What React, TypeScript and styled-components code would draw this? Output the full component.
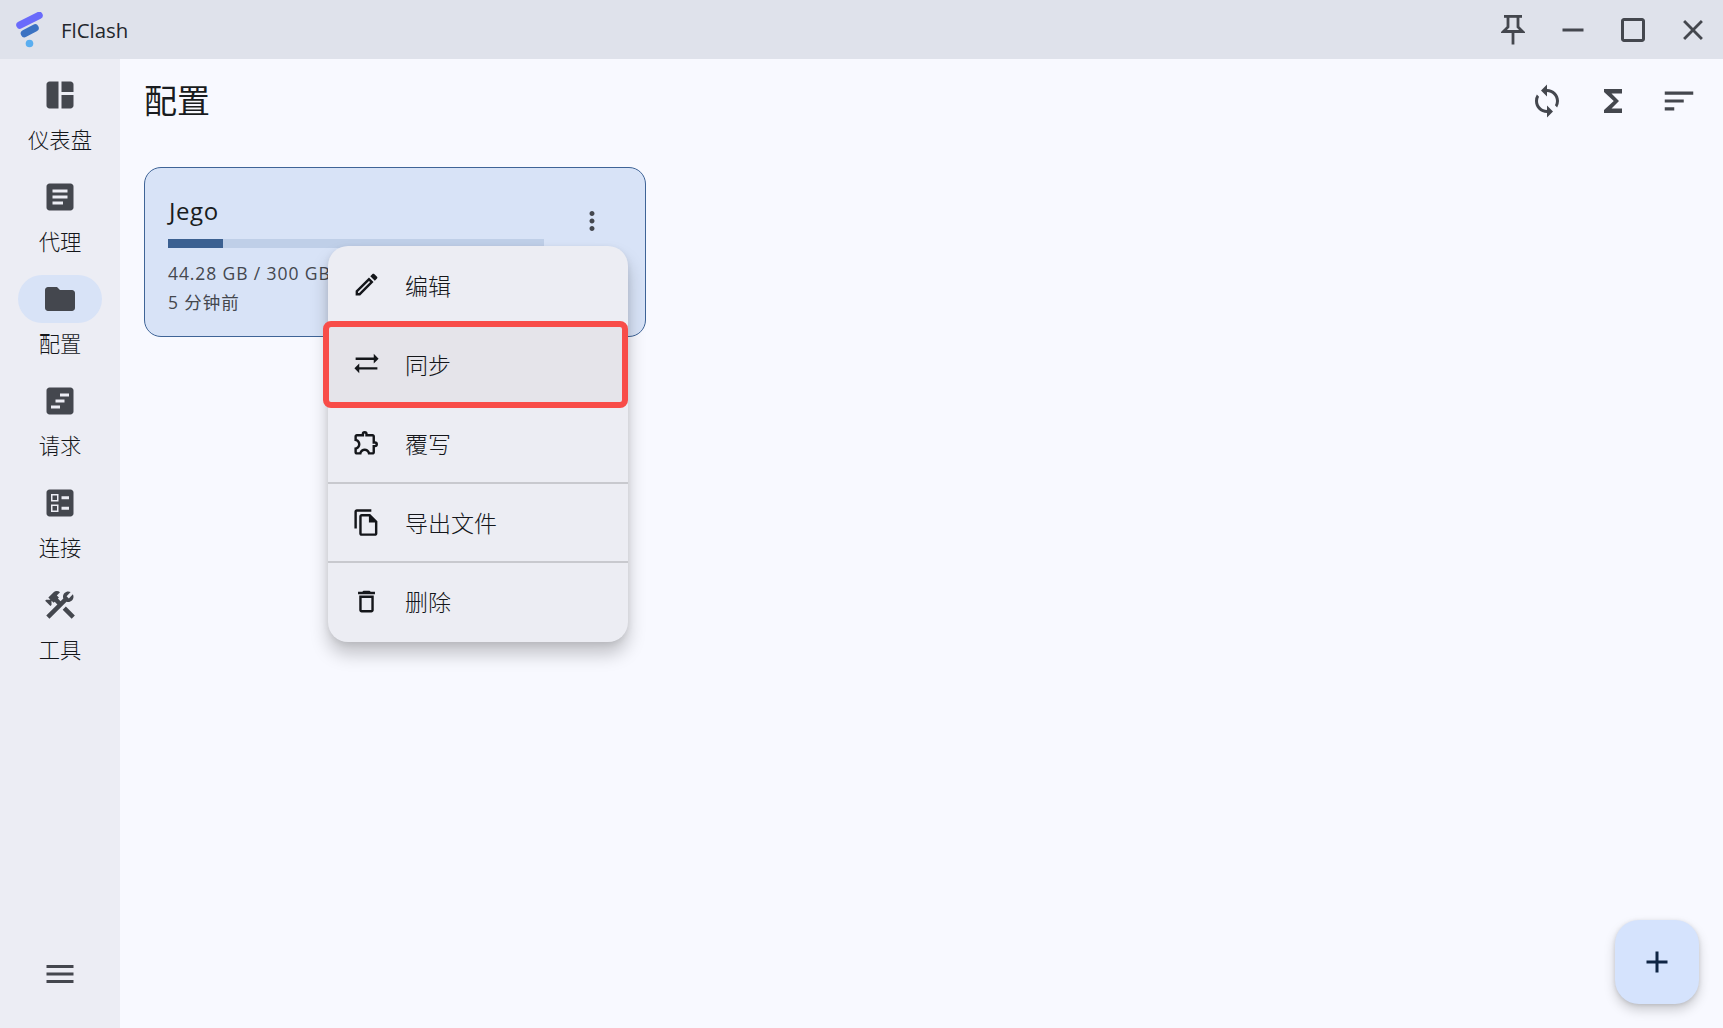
import React from "react";
import styled, { createGlobalStyle } from "styled-components";
import {
  MdSpaceDashboard, MdArticle, MdFolder, MdViewTimeline, MdBallot, MdConstruction, MdMenu,
  MdRemove, MdCropSquare, MdClose, MdSync, MdFunctions, MdSort, MdAdd, MdMoreVert,
  MdOutlineEdit, MdSyncAlt, MdOutlineExtension, MdOutlineFileCopy, MdOutlineDelete,
} from "react-icons/md";

const Global = createGlobalStyle`
  html, body { margin: 0; padding: 0; height: 100%; overflow: hidden; }
  body { font-family: "Open Sans", "Noto Sans CJK SC", sans-serif; color: #191c20; }
  #root { height: 100%; }
`;

const Shell = styled.div`
  width: 1723px;
  height: 1028px;
  display: flex;
  flex-direction: column;
  background: #f8f9ff;
  overflow: hidden;
`;
const TitleBar = styled.header`
  height: 59px;
  flex: none;
  background: #dfe2eb;
  display: flex;
  align-items: center;
  padding: 0 0 0 16px;
`;
const Brand = styled.div`
  display: flex;
  align-items: center;
  gap: 17px;
  flex: 1;
  font-size: 20.4px;
  color: #23262b;
  padding-top: 1px;
`;
const WindowButtons = styled.div`
  display: flex;
  align-items: center;
  width: 240px;
  color: #44474e;
`;
const WindowButton = styled.span`
  width: 60px;
  display: flex;
  justify-content: center;
`;
const Body = styled.div`
  flex: 1;
  display: flex;
  min-height: 0;
`;
const Sidebar = styled.nav`
  width: 120px;
  flex: none;
  background: #ecedf4;
  display: flex;
  flex-direction: column;
  align-items: center;
  padding-top: 12px;
  box-sizing: border-box;
`;
const NavItem = styled.div`
  height: 102px;
  display: flex;
  flex-direction: column;
  align-items: center;
  flex: none;
`;
const NavPill = styled.div<{ $active?: boolean }>`
  width: 84px;
  height: 48px;
  border-radius: 24px;
  background: ${(p) => (p.$active ? "#d8e3f7" : "transparent")};
  color: #44474e;
  display: flex;
  align-items: center;
  justify-content: center;
`;
const NavLabel = styled.span`
  font-size: 21.3px;
  line-height: 30px;
  margin-top: 6px;
  color: #14161a;
  font-weight: 300;
`;
const MenuToggle = styled.div`
  margin-top: auto;
  height: 72px;
  display: flex;
  align-items: flex-start;
  color: #44474e;
`;
const Main = styled.main`
  flex: 1;
  min-width: 0;
  display: flex;
  flex-direction: column;
  position: relative;
`;
const AppBar = styled.div`
  height: 84px;
  flex: none;
  display: flex;
  align-items: center;
  padding: 0 25px 0 24px;
  box-sizing: border-box;
`;
const PageTitle = styled.h1`
  flex: 1;
  margin: 0;
  font-size: 33px;
  font-weight: 400;
  line-height: 84px;
  height: 84px;
`;
const Actions = styled.div`
  display: flex;
  align-items: center;
  color: #44474e;
  gap: 30px;
`;
const SortIcon = styled(MdSort)`
  margin-left: -1px;
`;
const Content = styled.div`
  padding: 24px 0 0 25px;
`;
const CardWrap = styled.div`
  position: relative;
  width: 502px;
  margin-left: -1px;
`;
const Card = styled.section`
  box-sizing: border-box;
  width: 502px;
  height: 170px;
  border: 1.5px solid #3f6497;
  border-radius: 17px;
  background: #d8e3f7;
  padding: 26px 22px 0 23px;
  position: relative;
`;
const CardTitle = styled.div`
  font-size: 24px;
  line-height: 34px;
  height: 34px;
  color: #191c20;
  padding-left: 1px;
  letter-spacing: 0.6px;
`;
const Track = styled.div`
  width: 376px;
  height: 9px;
  margin-top: 11px;
  background: #bfcfe8;
`;
const Fill = styled.div`
  height: 100%;
  background: #3b6091;
`;
const Meta = styled.div`
  font-size: 17.5px;
  line-height: 29px;
  letter-spacing: 0.9px;
  color: #44474e;
  white-space: nowrap;
`;
const MetaFirst = styled(Meta)`
  margin-top: 11px;
`;
const MoreButton = styled.span`
  position: absolute;
  top: 38px;
  right: 38px;
  color: #44474e;
  display: flex;
`;
const Menu = styled.div`
  position: absolute;
  left: 184px;
  top: 79px;
  width: 300px;
  border-radius: 20px;
  background: #ecedf3;
  box-shadow: 0 12px 18px rgba(0, 0, 0, 0.22), 0 2px 6px rgba(0, 0, 0, 0.08);
`;
const Item = styled.div<{ $selected?: boolean; $divider?: boolean }>`
  position: relative;
  box-sizing: border-box;
  height: 79.2px;
  display: flex;
  align-items: center;
  padding: 0 0 2px 24px;
  gap: 24px;
  font-size: 23px;
  font-weight: 300;
  color: #14161a;
  background: ${(p) => (p.$selected ? "#e5e4ea" : "transparent")};
  &::after {
    content: "";
    display: ${(p) => (p.$divider ? "block" : "none")};
    position: absolute;
    left: 0;
    right: 0;
    bottom: 0;
    height: 2px;
    background: #c8c9ce;
  }
`;
const Highlight = styled.span`
  position: absolute;
  left: -5px;
  right: 0;
  top: -4px;
  bottom: -4px;
  border: 6px solid #f84c48;
  border-radius: 8px;
  pointer-events: none;
`;
const Fab = styled.button`
  position: absolute;
  right: 24px;
  bottom: 24px;
  width: 84px;
  height: 84px;
  border: 0;
  padding: 0;
  border-radius: 24px;
  background: #d5e3fd;
  color: #0f2544;
  display: flex;
  align-items: center;
  justify-content: center;
  box-shadow: 0 6px 12px rgba(0, 0, 0, 0.18), 0 1px 4px rgba(0, 0, 0, 0.12);
`;

const Logo = () => (
  <svg width="28" height="36" viewBox="0 0 28 36">
    <path d="M4 13 L23 3.5" stroke="#6a6bfb" strokeWidth="7.5" strokeLinecap="round" />
    <path d="M8.5 21.5 L19 16" stroke="#3b72c2" strokeWidth="7.5" strokeLinecap="round" />
    <circle cx="13.5" cy="31.5" r="3.8" fill="#5aaef0" />
  </svg>
);

const Pin = () => (
  <svg width="24" height="32" viewBox="0 0 24 32" fill="none" stroke="currentColor" strokeWidth="2.8">
    <path d="M3 2.4 H21" />
    <path d="M7 2.4 V13 L2.5 17.5 H21.5 L17 13 V2.4" />
    <path d="M12 17.5 V30.5" />
  </svg>
);

const navItems = [
  { label: "仪表盘", icon: <MdSpaceDashboard size={36} /> },
  { label: "代理", icon: <MdArticle size={36} /> },
  { label: "配置", icon: <MdFolder size={36} />, active: true },
  { label: "请求", icon: <MdViewTimeline size={36} /> },
  { label: "连接", icon: <MdBallot size={36} /> },
  { label: "工具", icon: <MdConstruction size={36} /> },
];

const menuItems = [
  { label: "编辑", icon: <MdOutlineEdit size={29} /> },
  { label: "同步", icon: <MdSyncAlt size={29} />, selected: true },
  { label: "覆写", icon: <MdOutlineExtension size={29} />, divider: true },
  { label: "导出文件", icon: <MdOutlineFileCopy size={29} />, divider: true },
  { label: "删除", icon: <MdOutlineDelete size={29} /> },
];

export default function App() {
  return (
    <Shell>
      <Global />
      <TitleBar>
        <Brand>
          <Logo />
          FlClash
        </Brand>
        <WindowButtons>
          <WindowButton><Pin /></WindowButton>
          <WindowButton><MdRemove size={36} /></WindowButton>
          <WindowButton><MdCropSquare size={36} /></WindowButton>
          <WindowButton><MdClose size={34} /></WindowButton>
        </WindowButtons>
      </TitleBar>
      <Body>
        <Sidebar>
          {navItems.map((n) => (
            <NavItem key={n.label}>
              <NavPill $active={n.active}>{n.icon}</NavPill>
              <NavLabel>{n.label}</NavLabel>
            </NavItem>
          ))}
          <MenuToggle><MdMenu size={36} /></MenuToggle>
        </Sidebar>
        <Main>
          <AppBar>
            <PageTitle>配置</PageTitle>
            <Actions>
              <MdSync size={36} />
              <MdFunctions size={36} />
              <SortIcon size={38} />
            </Actions>
          </AppBar>
          <Content>
            <CardWrap>
              <Card>
                <CardTitle>Jego</CardTitle>
                <Track><Fill style={{ width: `${(44.28 / 300) * 100}%` }} /></Track>
                <MetaFirst>44.28 GB / 300 GB</MetaFirst>
                <Meta>5 分钟前</Meta>
                <MoreButton><MdMoreVert size={30} /></MoreButton>
              </Card>
              <Menu>
                {menuItems.map((m) => (
                  <Item key={m.label} $selected={m.selected} $divider={m.divider}>
                    {m.icon}
                    {m.label}
                    {m.selected && <Highlight />}
                  </Item>
                ))}
              </Menu>
            </CardWrap>
          </Content>
          <Fab><MdAdd size={36} /></Fab>
        </Main>
      </Body>
    </Shell>
  );
}
